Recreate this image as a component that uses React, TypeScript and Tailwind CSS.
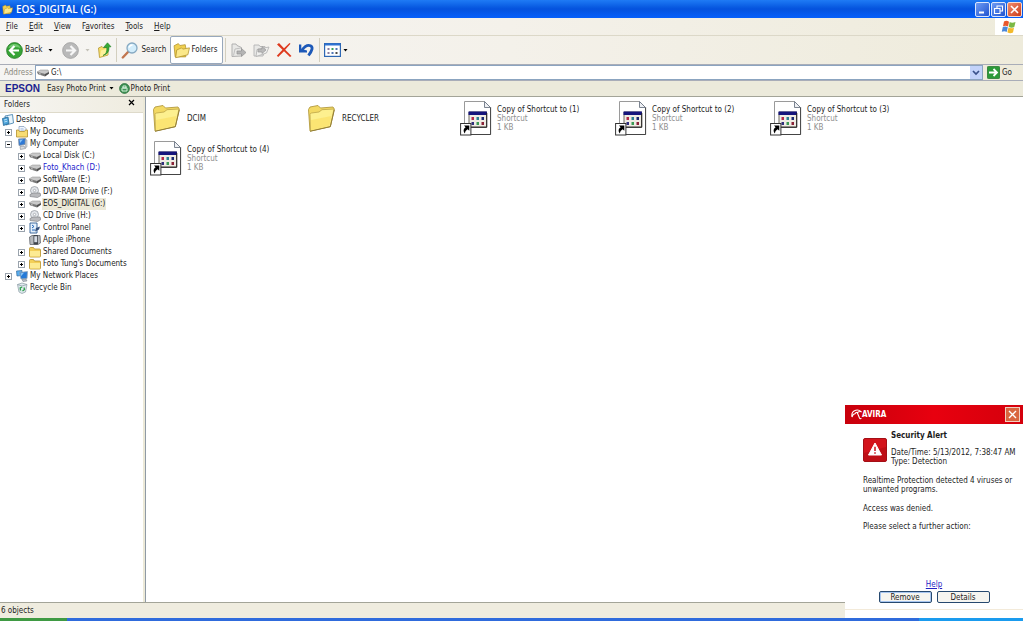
import React, { useState } from 'react';

type IconProps = { className?: string };

const Caret = ({ className = 'text-black' }: IconProps) => (
  <svg width="5" height="3" viewBox="0 0 5 3" className={className} aria-hidden="true">
    <path d="M.5 0h4L2.500 2.500z" fill="currentColor" />
  </svg>
);

const OpenFolder = ({ className = 'size-4' }: IconProps) => (
  <svg viewBox="0 0 16 16" className={className} aria-hidden="true">
    <path d="M1 3.500 5 1.500l1.500 1.800 5-.8.5 3V14L2 14z" fill="#f0d050" stroke="#b0902c" strokeWidth=".7" />
    <path d="M3.500 7.500 8 5.500l1.200 1.200L15.500 5.500 14 12 2.500 14.800z" fill="#fbe88a" stroke="#b0902c" strokeWidth=".7" />
  </svg>
);

const SmallFolder = () => (
  <svg viewBox="0 0 12 12" className="size-3 shrink-0" aria-hidden="true">
    <path d="M.5 2.500Q.5 1.500 1.500 1.500h3l1 1.500h5q1 0 1 1V10q0 1-1 1h-9q-1 0-1-1z" fill="#f3cf58" stroke="#b5902c" strokeWidth=".8" />
    <path d="M1 5h10v5.200q0 .4-.5.4h-9q-.5 0-.5-.4z" fill="#fdeb92" />
  </svg>
);

const Drive = () => (
  <svg viewBox="0 0 12 12" className="size-3 shrink-0" aria-hidden="true">
    <path d="M0 5 3.500 3H11l1 2-4 2.500z" fill="#c9c9c9" stroke="#8b8b8b" strokeWidth=".5" />
    <path d="M0 5l8 2v2.500L1 7.200z" fill="#777" />
    <path d="M8 7l4-2v1.800L8 9.500z" fill="#505050" />
    <path d="M2 6.500l2 .6" stroke="#dcdcdc" strokeWidth=".7" />
  </svg>
);

const Disc = () => (
  <svg viewBox="0 0 12 12" className="size-3 shrink-0" aria-hidden="true">
    <circle cx="5.500" cy="4.500" r="4" fill="#e3e6ea" stroke="#8d9299" strokeWidth=".7" />
    <circle cx="5.500" cy="4.500" r="1.200" fill="#fff" stroke="#8d9299" strokeWidth=".6" />
    <path d="M1 8.500l3-1.500h7L12 9.500l-3.500 2L1 10.500z" fill="#b9babd" stroke="#77797d" strokeWidth=".6" />
  </svg>
);

const DesktopIcon = () => (
  <svg viewBox="0 0 12 12" className="size-3 shrink-0" aria-hidden="true">
    <path d="M3 2 10.500.5l1 8.500L4 11z" fill="#e9f5fc" stroke="#3a7ba8" strokeWidth=".8" />
    <path d="M.5 4.500 6 3l1 6.500L1.500 11.500z" fill="#4da4da" stroke="#236695" strokeWidth=".8" />
    <path d="M2 6l3-.8M2.300 8l3-.8" stroke="#d9f1ff" strokeWidth=".8" />
  </svg>
);

const DocumentsIcon = () => (
  <svg viewBox="0 0 12 12" className="size-3 shrink-0" aria-hidden="true">
    <path d="M3 .5h5L10 2.500V9H3z" fill="#f4f8ff" stroke="#7b95b8" strokeWidth=".7" />
    <path d="M.5 4h2l1 1.500h5L9.500 4h2v7H.5z" fill="#f7dc74" stroke="#b5902c" strokeWidth=".8" />
    <path d="M4.500 2.800h3M4.500 4.200h4" stroke="#7c9ed0" strokeWidth=".6" />
  </svg>
);

const ComputerIcon = () => (
  <svg viewBox="0 0 12 12" className="size-3 shrink-0" aria-hidden="true">
    <path d="M2.500 1 9.500.5l-.5 6-6 1z" fill="#2d78d6" stroke="#8290a2" strokeWidth=".8" />
    <path d="M3.500 1.800l3.500-.2L4 5z" fill="#8ac3f6" />
    <path d="M9.800 1.500l1.200.5V9l-1.700.8z" fill="#d3d7dc" stroke="#8d949d" strokeWidth=".5" />
    <path d="M4 8.500 8 8l1.500 2.500-5 1z" fill="#d6dade" stroke="#7e858f" strokeWidth=".6" />
  </svg>
);

const ControlPanelIcon = () => (
  <svg viewBox="0 0 12 12" className="size-3 shrink-0" aria-hidden="true">
    <path d="M1 1h7v10H1z" fill="#e4f0fc" stroke="#2e5c94" strokeWidth=".9" />
    <path d="M3 3l2 1.500L3 6M3 8h3" stroke="#1d63b8" strokeWidth="1" fill="none" />
    <path d="M6 9.500 7 6l4-1.500-1 3z" fill="#35507b" />
  </svg>
);

const PhoneIcon = () => (
  <svg viewBox="0 0 12 12" className="size-3 shrink-0" aria-hidden="true">
    <path d="M.5 3 3 1.500h8L11.500 9 9 10.500H1z" fill="#b6b9bd" stroke="#666a70" strokeWidth=".8" />
    <rect x="4.500" y="1" width="4.500" height="9.500" rx=".8" fill="#3f444b" />
    <rect x="5.300" y="2.200" width="2.900" height="6" fill="#d7dde5" />
  </svg>
);

const NetworkIcon = () => (
  <svg viewBox="0 0 12 12" className="size-3 shrink-0" aria-hidden="true">
    <path d="M.5 1 6 .5v5L1 6z" fill="#58aef0" stroke="#376c9e" strokeWidth=".7" />
    <path d="M3.500 2.500l8-1-.5 7-6 .5z" fill="#2379d8" stroke="#8fa3b8" strokeWidth=".8" />
    <path d="M4.500 3.300l3.500-.5-3 3.500z" fill="#86c4f6" />
    <path d="M6 9.500l4-.5 1 2-4 .5z" fill="#b8bec6" stroke="#6d7680" strokeWidth=".5" />
  </svg>
);

const RecycleIcon = () => (
  <svg viewBox="0 0 12 12" className="size-3 shrink-0" aria-hidden="true">
    <path d="M1.500 2.500 6 1l5 1.500L9.500 10 6 11.500 3 10z" fill="#dfe9ee" stroke="#8a9ba4" strokeWidth=".7" />
    <path d="M1.500 2.500 6 4l5-1.500" fill="none" stroke="#8a9ba4" strokeWidth=".7" />
    <path d="M4.500 8.500 4.200 6l2-1M8 5.500l.5 2L6.500 9" stroke="#2ea04b" strokeWidth="1.300" fill="none" />
  </svg>
);

const BackIcon = () => (
  <svg viewBox="0 0 17 17" className="size-[17px] shrink-0" aria-hidden="true">
    <circle cx="8.500" cy="8.500" r="7.900" fill="#37a437" stroke="#2a7d2a" strokeWidth=".8" />
    <path d="M2.500 6a6.500 6.500 0 0 1 12 0q-6-2-12 0z" fill="#8bd98a" opacity=".7" />
    <path d="M8.500 4 4 8.500 8.500 13M4.500 8.500H13" fill="none" stroke="#fff" strokeWidth="2.200" />
  </svg>
);

const ForwardIcon = () => (
  <svg viewBox="0 0 17 17" className="size-[17px] shrink-0" aria-hidden="true">
    <circle cx="8.500" cy="8.500" r="7.900" fill="#b9b9b9" stroke="#a2a2a2" strokeWidth=".8" />
    <path d="M8.500 4 13 8.500 8.500 13M12.500 8.500H4" fill="none" stroke="#f6f6f6" strokeWidth="2.200" />
  </svg>
);

const UpFolderIcon = () => (
  <svg viewBox="0 0 16 16" className="size-4 shrink-0" aria-hidden="true">
    <path d="M2.500 6 6 4.500 7.500 6l4.500-1v8L3.500 15.500z" fill="#f8e06c" stroke="#b5962f" strokeWidth=".8" />
    <path d="M4 14.500 5 8.500l7-2-.7 6.200z" fill="#fdf19c" />
    <path d="M7 13.500q4.500-2 3.800-8H7.500L11.500.8 15 4.800h-2Q13.500 12 7 13.500z" fill="#36ab36" stroke="#1e7d20" strokeWidth=".6" />
  </svg>
);

const SearchIcon = () => (
  <svg viewBox="0 0 17 17" className="size-[17px] shrink-0" aria-hidden="true">
    <path d="M7.500 9.500 1.800 15.500" stroke="#c2764f" strokeWidth="2.400" strokeLinecap="round" />
    <circle cx="11" cy="6" r="5" fill="#d3edfb" stroke="#86a9c2" strokeWidth="1.300" />
    <path d="M8 5.500Q9 3 11.500 3" stroke="#fff" strokeWidth="1.400" fill="none" />
  </svg>
);

const MoveToIcon = () => (
  <svg viewBox="0 0 17 16" className="h-4 w-[17px]" aria-hidden="true">
    <path d="M2 2h4l1 1.500 4.500 2V14L2 14.500z" fill="#e8e8e6" stroke="#aaa" strokeWidth=".9" />
    <path d="M3.500 13.500 5 7l6-1" fill="none" stroke="#b5b5b5" strokeWidth=".8" />
    <path d="M7 9h4.500V6.500L16 10.500l-4.500 4V12H7z" fill="#b4b4b4" stroke="#949494" strokeWidth=".7" />
  </svg>
);

const CopyToIcon = () => (
  <svg viewBox="0 0 17 16" className="h-4 w-[17px]" aria-hidden="true">
    <path d="M1 3h5l1 1.500h5v3L10 14H1z" fill="#e8e8e6" stroke="#b4b4b4" strokeWidth=".9" />
    <path d="M4 7.500 16 5l-2.500 6L3 14.500z" fill="#efefed" stroke="#b0b0b0" strokeWidth=".8" />
    <path d="M5 7h4V4.500L13 8l-4 3.500V10H5z" fill="#bababa" stroke="#999" strokeWidth=".7" />
  </svg>
);

const DeleteIcon = () => (
  <svg viewBox="0 0 16 16" className="size-4" aria-hidden="true">
    <path d="M1 2.500 3 1l5 5.300L13.500 1l1 .8L9.200 7.700 15.500 14l-1.500 1L8 9.200 2.200 15 .8 13.800 6.500 7.800z" fill="#de3a1e" />
  </svg>
);

const UndoIcon = () => (
  <svg viewBox="0 0 17 16" className="h-4 w-[17px]" aria-hidden="true">
    <path d="M4 8Q8.500 2 12.500 3.800T10.500 13.500" fill="none" stroke="#1d59b8" strokeWidth="2.800" />
    <path d="M1 2.500h2.300V7L9 8.500v2H1z" fill="#1d59b8" />
  </svg>
);

const ViewsIcon = () => (
  <svg viewBox="0 0 17 14" className="h-[14px] w-[17px]" aria-hidden="true">
    <rect x=".6" y=".6" width="15.800" height="12.800" fill="#fff" stroke="#2d67b4" strokeWidth="1.200" />
    <path d="M1 1.500h15" stroke="#2e72d2" strokeWidth="2" />
    <path d="M3.500 6h2M3.500 10h2" stroke="#8a7ca0" strokeWidth="2" />
    <path d="M7.500 6h2" stroke="#38a05c" strokeWidth="2" />
    <path d="M7.500 10h2M11.500 6h2" stroke="#5177b5" strokeWidth="2" />
    <path d="M11.500 10h2" stroke="#4b4b4b" strokeWidth="2" />
  </svg>
);

const WindowsFlag = () => (
  <svg viewBox="0 0 16 14" className="h-[14px] w-4" aria-hidden="true">
    <path d="M3 1.500Q5.500 0 8 1.800L7 6.500Q4.500 5 2 6.300z" fill="#e8572b" />
    <path d="M8.700 2Q11 3.500 14.500 2L13.300 7Q10.500 8.500 7.700 6.800z" fill="#7ab844" />
    <path d="M1.800 7Q4.300 5.800 6.800 7.300L5.700 12Q3.500 10.500.8 11.800z" fill="#4a87d8" />
    <path d="M7.500 7.600Q10 9 13 7.700L12 12.500Q9 14 6.400 12.300z" fill="#f3b92a" />
  </svg>
);

const BigFolder = () => (
  <svg viewBox="-1 -1 28 28" className="size-7" aria-hidden="true">
    <path d="M.5 4.500 2 2l8-1.500L12.500 3 25 2l1.300 2-4 17.500L2 26z" fill="#f3d963" stroke="#b29a3f" strokeWidth=".9" />
    <path d="M2 9.500q0-1.200 1.500-1.500L11 7l3-2.300L26 4l-3.700 17.500L2.500 26z" fill="#fdf08f" stroke="#bda547" strokeWidth=".8" />
    <path d="M3 15 23.500 11l-2.200 10L3 25.300z" fill="#fae26c" opacity=".8" />
    <path d="M2 26.300 22.300 21.700 26.300 5" fill="none" stroke="#8e7b35" strokeWidth=".9" />
  </svg>
);

const ShortcutIcon = () => (
  <svg viewBox="0 0 32 36" className="h-9 w-8" aria-hidden="true">
    <path d="M4.500 1.500H24.500l6 6V34.500H4.500z" fill="#fff" stroke="#9a9a9a" strokeWidth="1" />
    <path d="M30.600 7V34.500H5" fill="none" stroke="#444" strokeWidth="1" />
    <path d="M24.500 1.500v6h6z" fill="#eef0f4" stroke="#6d7685" strokeWidth=".9" />
    <path d="M9 12h17.500v15H9z" fill="#efece4" stroke="#6e6a62" strokeWidth="1" />
    <path d="M8.500 11.500H27v3.500H8.500z" fill="#15157c" />
    <path d="M11.500 17h2.500v3h-2.500z" fill="#b32c4a" />
    <path d="M16.500 17h2.500v3h-2.500z" fill="#2d7f93" />
    <path d="M21.500 17h2.500v3h-2.500z" fill="#1b2a74" />
    <path d="M11.500 22h2.500v3h-2.500z" fill="#31307f" />
    <path d="M16.500 22h2.500v3h-2.500z" fill="#3a9a54" />
    <path d="M21.500 22h2.500v3h-2.500z" fill="#8a2339" />
    <path d="M26.800 13V27.300H9" fill="none" stroke="#222" strokeWidth="1" />
    <rect x=".6" y="23.500" width="10.300" height="11.500" fill="#fff" stroke="#333" strokeWidth="1" />
    <path d="M4 25.500h5.300v5.300L7.600 29.200Q5 30.500 4.800 33.500 2 29.500 5.600 27.200z" fill="#000" />
  </svg>
);

const AviraMark = () => (
  <svg viewBox="0 0 11 11" className="size-[11px]" aria-hidden="true">
    <path d="M1 8Q0 2.500 4.800 1.200 8 .5 10 2.600 7.500 2.300 6.700 3.500 4.800 3 4 4.800 2 4.800 1 8z" fill="none" stroke="#fff" strokeWidth="1.100" />
    <path d="M6.200 3.500 8.500 9q.7 1.200 1.900.3" fill="none" stroke="#fff" strokeWidth="1.100" />
  </svg>
);

const AlertIcon = () => (
  <svg viewBox="0 0 24 24" className="size-6 shrink-0" aria-hidden="true">
    <rect x=".5" y=".5" width="23" height="23" rx="1.500" fill="#d3141c" stroke="#a40f16" />
    <path d="M1 15 23 9V23H1z" fill="#b50d14" opacity=".7" />
    <path d="M12 5 18.500 17h-13z" fill="#fff" stroke="#fff" strokeWidth="1" strokeLinejoin="round" />
    <path d="M12 8.800v4.200M12 14.300v1.500" stroke="#c9151c" strokeWidth="1.500" />
  </svg>
);

type Node = {
  label: string;
  level: 0 | 1 | 2;
  icon: React.ComponentType;
  box?: '+' | '-';
  tone?: 'link' | 'selected';
};

const tree: Node[] = [
  { label: 'Desktop', level: 0, icon: DesktopIcon },
  { label: 'My Documents', level: 1, icon: DocumentsIcon, box: '+' },
  { label: 'My Computer', level: 1, icon: ComputerIcon, box: '-' },
  { label: 'Local Disk (C:)', level: 2, icon: Drive, box: '+' },
  { label: 'Foto_Khach (D:)', level: 2, icon: Drive, box: '+', tone: 'link' },
  { label: 'SoftWare (E:)', level: 2, icon: Drive, box: '+' },
  { label: 'DVD-RAM Drive (F:)', level: 2, icon: Disc, box: '+' },
  { label: 'EOS_DIGITAL (G:)', level: 2, icon: Drive, box: '+', tone: 'selected' },
  { label: 'CD Drive (H:)', level: 2, icon: Disc, box: '+' },
  { label: 'Control Panel', level: 2, icon: ControlPanelIcon, box: '+' },
  { label: 'Apple iPhone', level: 2, icon: PhoneIcon },
  { label: 'Shared Documents', level: 2, icon: SmallFolder, box: '+' },
  { label: "Foto Tung's Documents", level: 2, icon: SmallFolder, box: '+' },
  { label: 'My Network Places', level: 1, icon: NetworkIcon, box: '+' },
  { label: 'Recycle Bin', level: 1, icon: RecycleIcon },
];

const indents = ['pl-0.5', 'pl-1', 'pl-[17px]'];

function TreeRow({ node }: { node: Node }) {
  const Icon = node.icon;
  const tone =
    node.tone === 'link' ? 'text-[#2222cc]' : node.tone === 'selected' ? 'bg-[#ece9d8]' : '';
  return (
    <li className={`flex h-3 items-center ${indents[node.level]}`}>
      {node.level > 0 && (
        <span className="mr-1 flex w-2 shrink-0 justify-center">
          {node.box && (
            <button
              aria-label={`${node.box === '+' ? 'Expand' : 'Collapse'} ${node.label}`}
              className="flex size-[7px] items-center justify-center border border-[#9aa3ad] bg-white"
            >
              <svg viewBox="0 0 5 5" className="size-[5px] shrink-0" aria-hidden="true">
                <path d={node.box === '+' ? 'M1 2.500h3M2.500 1v3' : 'M1 2.500h3'} stroke="#000" />
              </svg>
            </button>
          )}
        </span>
      )}
      <Icon />
      <button className={`ml-px h-3 px-px leading-3 whitespace-nowrap ${tone}`}>{node.label}</button>
    </li>
  );
}

const files = [
  { name: 'DCIM', folder: true },
  { name: 'RECYCLER', folder: true },
  { name: 'Copy of Shortcut to (1)', folder: false },
  { name: 'Copy of Shortcut to (2)', folder: false },
  { name: 'Copy of Shortcut to (3)', folder: false },
  { name: 'Copy of Shortcut to (4)', folder: false },
];

const menus = [
  ['F', 'ile', ''],
  ['E', 'dit', ''],
  ['V', 'iew', ''],
  ['a', 'vorites', 'F'],
  ['T', 'ools', ''],
  ['H', 'elp', ''],
];

const Separator = () => <span className="h-6 w-px bg-[#d3cfbf]" />;

function TitleBar() {
  const small =
    'flex size-[15px] items-center justify-center rounded-xs border border-[#dbe6fb] bg-linear-to-br from-[#6f9bf3] to-[#2152cf]';
  return (
    <header className="flex h-[18px] shrink-0 items-center gap-[3px] bg-linear-to-b from-[#1f7bf5] via-[#0552dd] to-[#0660fb] pr-px pl-0.5">
      <OpenFolder className="size-[11px]" />
      <h1 className="grow font-['Open_Sans','Noto_Sans',sans-serif] text-[10px] leading-3 font-semibold text-white">
        EOS_DIGITAL (G:)
      </h1>
      <div className="flex gap-px">
        <button aria-label="Minimize" className={small}>
          <svg viewBox="0 0 11 11" className="size-[11px]"><path d="M2 8.500h5" stroke="#fff" strokeWidth="2" /></svg>
        </button>
        <button aria-label="Restore" className={small}>
          <svg viewBox="0 0 11 11" className="size-[11px]">
            <path d="M4 4V2h5.500v5H7.500M1.500 4.500h5.500v5H1.500z" fill="none" stroke="#fff" strokeWidth="1.100" />
          </svg>
        </button>
        <button
          aria-label="Close"
          className="flex size-[15px] items-center justify-center rounded-xs border border-[#f6d9d0] bg-linear-to-br from-[#ee8a6c] to-[#cc3a12]"
        >
          <svg viewBox="0 0 11 11" className="size-[11px]"><path d="M2 2l7 7M9 2 2 9" stroke="#fff" strokeWidth="1.600" /></svg>
        </button>
      </div>
    </header>
  );
}

function Toolbar() {
  return (
    <div role="toolbar" className="flex h-[30px] shrink-0 items-center border-y border-t-[#dcd8c8] border-b-[#a9adb8] pl-1.5">
      <button className="flex items-center gap-0.5"><BackIcon />Back</button>
      <button aria-label="Back history" className="ml-1.5"><Caret /></button>
      <button aria-label="Forward" disabled className="ml-[9px]"><ForwardIcon /></button>
      <button aria-label="Forward history" disabled className="ml-1.5"><Caret className="text-[#c4c2b8]" /></button>
      <button aria-label="Up" className="mr-1 ml-1.5"><UpFolderIcon /></button>
      <Separator />
      <button className="mx-1 flex w-[45px] items-center gap-[3px]"><SearchIcon />Search</button>
      <button
        aria-pressed="true"
        className="mr-0.5 flex h-7 w-[53px] items-center gap-px rounded-xs border border-[#98a8bc] bg-white pl-0.5"
      >
        <OpenFolder className="size-[17px] shrink-0" />Folders
      </button>
      <Separator />
      <div className="mr-1 ml-1 flex items-center gap-1.5">
        <button aria-label="Move to" disabled><MoveToIcon /></button>
        <button aria-label="Copy to" disabled><CopyToIcon /></button>
        <button aria-label="Delete"><DeleteIcon /></button>
        <button aria-label="Undo"><UndoIcon /></button>
      </div>
      <Separator />
      <button aria-label="Views" className="ml-1 flex items-center gap-0.5"><ViewsIcon /><Caret /></button>
    </div>
  );
}

function AddressBar() {
  const [path, setPath] = useState('G:\\');
  return (
    <form className="flex h-[15px] shrink-0 items-center pl-1" onSubmit={(e) => e.preventDefault()}>
      <label htmlFor="address" className="w-[31px] text-[#8b897d]">Address</label>
      <div className="flex h-[15px] grow items-center border border-[#8ba4c0] bg-white pl-px">
        <Drive />
        <input
          id="address"
          value={path}
          onChange={(e) => setPath(e.target.value)}
          className="ml-0.5 min-w-0 grow bg-transparent outline-none"
        />
        <button type="button" aria-label="Address list" className="flex h-[13px] w-3 items-center justify-center bg-[#c3d3fa]">
          <svg viewBox="0 0 8 6" className="h-1.5 w-2"><path d="M1 1l3 3 3-3" fill="none" stroke="#39508a" strokeWidth="1.700" /></svg>
        </button>
      </div>
      <button type="submit" className="flex w-10 items-center gap-0.5 pl-1">
        <svg viewBox="0 0 13 13" className="size-[13px] shrink-0" aria-hidden="true">
          <rect x=".4" y=".4" width="12.200" height="12.200" rx="1" fill="#2c9a38" stroke="#1f7429" strokeWidth=".8" />
          <path d="M2 6.500h8M6.500 3 10 6.500 6.500 10" fill="none" stroke="#fff" strokeWidth="1.800" />
        </svg>
        Go
      </button>
    </form>
  );
}

function AlertPopup() {
  const action = 'h-3 w-[53px] rounded-xs border border-[#27496f] bg-[#f6f5f0] leading-[11px]';
  return (
    <aside
      role="alertdialog"
      aria-labelledby="alert-title"
      className="absolute right-0 bottom-[3px] flex h-[213px] w-[178px] flex-col bg-white"
    >
      <div className="flex h-[19px] items-center bg-linear-to-r from-[#c8000c] via-[#e8000f] to-[#d4000c] pr-[3px] pl-1.5">
        <AviraMark />
        <span className="grow pt-px text-[8px] font-bold text-white">AVIRA</span>
        <button aria-label="Close alert" className="flex size-[15px] items-center justify-center border border-[#f1cfc0] bg-[#d9653f]">
          <svg viewBox="0 0 11 11" className="size-[11px]"><path d="M2 2l7 7M9 2 2 9" stroke="#fff" strokeWidth="1.400" /></svg>
        </button>
      </div>
      <div className="grow pt-[7px] pl-[18px] leading-[9px]">
        <div className="flex gap-1">
          <div className="pt-[7px]"><AlertIcon /></div>
          <div className="whitespace-nowrap">
            <h2 id="alert-title" className="mb-2 font-bold">Security Alert</h2>
            <p>Date/Time: 5/13/2012, 7:38:47 AM</p>
            <p>Type: Detection</p>
          </div>
        </div>
        <p className="mt-2.5 whitespace-nowrap">Realtime Protection detected 4 viruses or<br />unwanted programs.</p>
        <p className="mt-2.5">Access was denied.</p>
        <p className="mt-[9px]">Please select a further action:</p>
      </div>
      <div className="flex flex-col items-center border-b border-[#f3ead9] pb-1.5 leading-[9px]">
        <a href="#help" className="mb-0.5 text-[#2323c4] underline">Help</a>
        <div className="flex gap-[5px]">
          <button className={`${action} shadow-[inset_0_0_0_1px_#a8c6f0]`}>Remove</button>
          <button className={action}>Details</button>
        </div>
      </div>
      <div className="h-2 shrink-0" />
    </aside>
  );
}

export default function App() {
  return (
    <div className="relative flex h-screen flex-col overflow-hidden bg-[#efecdf] font-['DejaVu_Sans_Condensed','DejaVu_Sans',sans-serif] text-[8px] leading-[10px] text-[#1c1c1c]">
      <TitleBar />
      <div className="flex flex-col bg-linear-to-r from-[#f6f5f3] via-[#f4f1ea] to-[#eeebdb]">
        <div className="flex h-[17px] shrink-0 items-stretch">
          <nav className="flex grow items-center gap-[11px] pt-px pl-1.5">
            {menus.map(([key, rest, before]) => (
              <button key={rest}>{before}<u>{key}</u>{rest}</button>
            ))}
          </nav>
          <div className="flex w-7 items-center justify-center bg-white"><WindowsFlag /></div>
        </div>
        <Toolbar />
        <AddressBar />
      </div>
      <div className="flex h-4 shrink-0 items-center border-t border-[#a9adb8] bg-[#eceadb] pl-[5px]">
        <span className="w-[42px] font-['Liberation_Sans',sans-serif] text-[10px] font-bold text-[#1b2290]">EPSON</span>
        <button className="flex items-center gap-[3px]">Easy Photo Print<Caret /></button>
        <button className="ml-[5px] flex items-center gap-px">
          <svg viewBox="0 0 11 11" className="size-[11px]" aria-hidden="true">
            <circle cx="5.500" cy="5.500" r="4.900" fill="#3f9455" stroke="#2a6d3b" strokeWidth=".8" />
            <path d="M3 5h5v3H3zM4 3h3v2H4z" fill="none" stroke="#e2f6e5" strokeWidth=".9" />
          </svg>
          Photo Print
        </button>
      </div>
      <div className="flex min-h-0 grow border-t border-[#a3a498]">
        <aside className="flex w-[143px] shrink-0 flex-col bg-white">
          <div className="flex h-4 items-center justify-between border-b border-[#dedaca] bg-linear-to-r from-[#f6f5f2] to-[#efecdf] pr-2 pl-1">
            <h2>Folders</h2>
            <button aria-label="Close folders" className="pb-1">
              <svg viewBox="0 0 7 7" className="size-[7px]"><path d="M1 1l5 5M6 1 1 6" stroke="#000" strokeWidth="1.200" /></svg>
            </button>
          </div>
          <ul className="pt-px">
            {tree.map((node) => <TreeRow key={node.label} node={node} />)}
          </ul>
        </aside>
        <div className="w-0.5 shrink-0 bg-[#ece9d8]" />
        <main className="grow border-l border-[#8f9aa5] bg-white">
          <ul className="flex flex-wrap content-start pt-px">
            {files.map((file) => (
              <li key={file.name} className="flex h-10 w-[155px] items-center gap-[5px] pl-1">
                <span className="flex w-8 shrink-0 justify-center">{file.folder ? <BigFolder /> : <ShortcutIcon />}</span>
                <button className="text-left leading-[9px] whitespace-nowrap">
                  {file.name}
                  {!file.folder && <span className="block text-[#8f8f8f]">Shortcut<br />1 KB</span>}
                </button>
              </li>
            ))}
          </ul>
        </main>
      </div>
      <footer className="flex h-4 shrink-0 items-center border-t border-[#a3a498] pt-px pl-px">6 objects</footer>
      <div className="flex h-[3px] shrink-0">
        <div className="w-[67px] bg-[#3f9a43]" />
        <div className="grow bg-[#2f6bdc]" />
        <div className="w-[104px] bg-[#1a9bee]" />
      </div>
      <AlertPopup />
    </div>
  );
}
